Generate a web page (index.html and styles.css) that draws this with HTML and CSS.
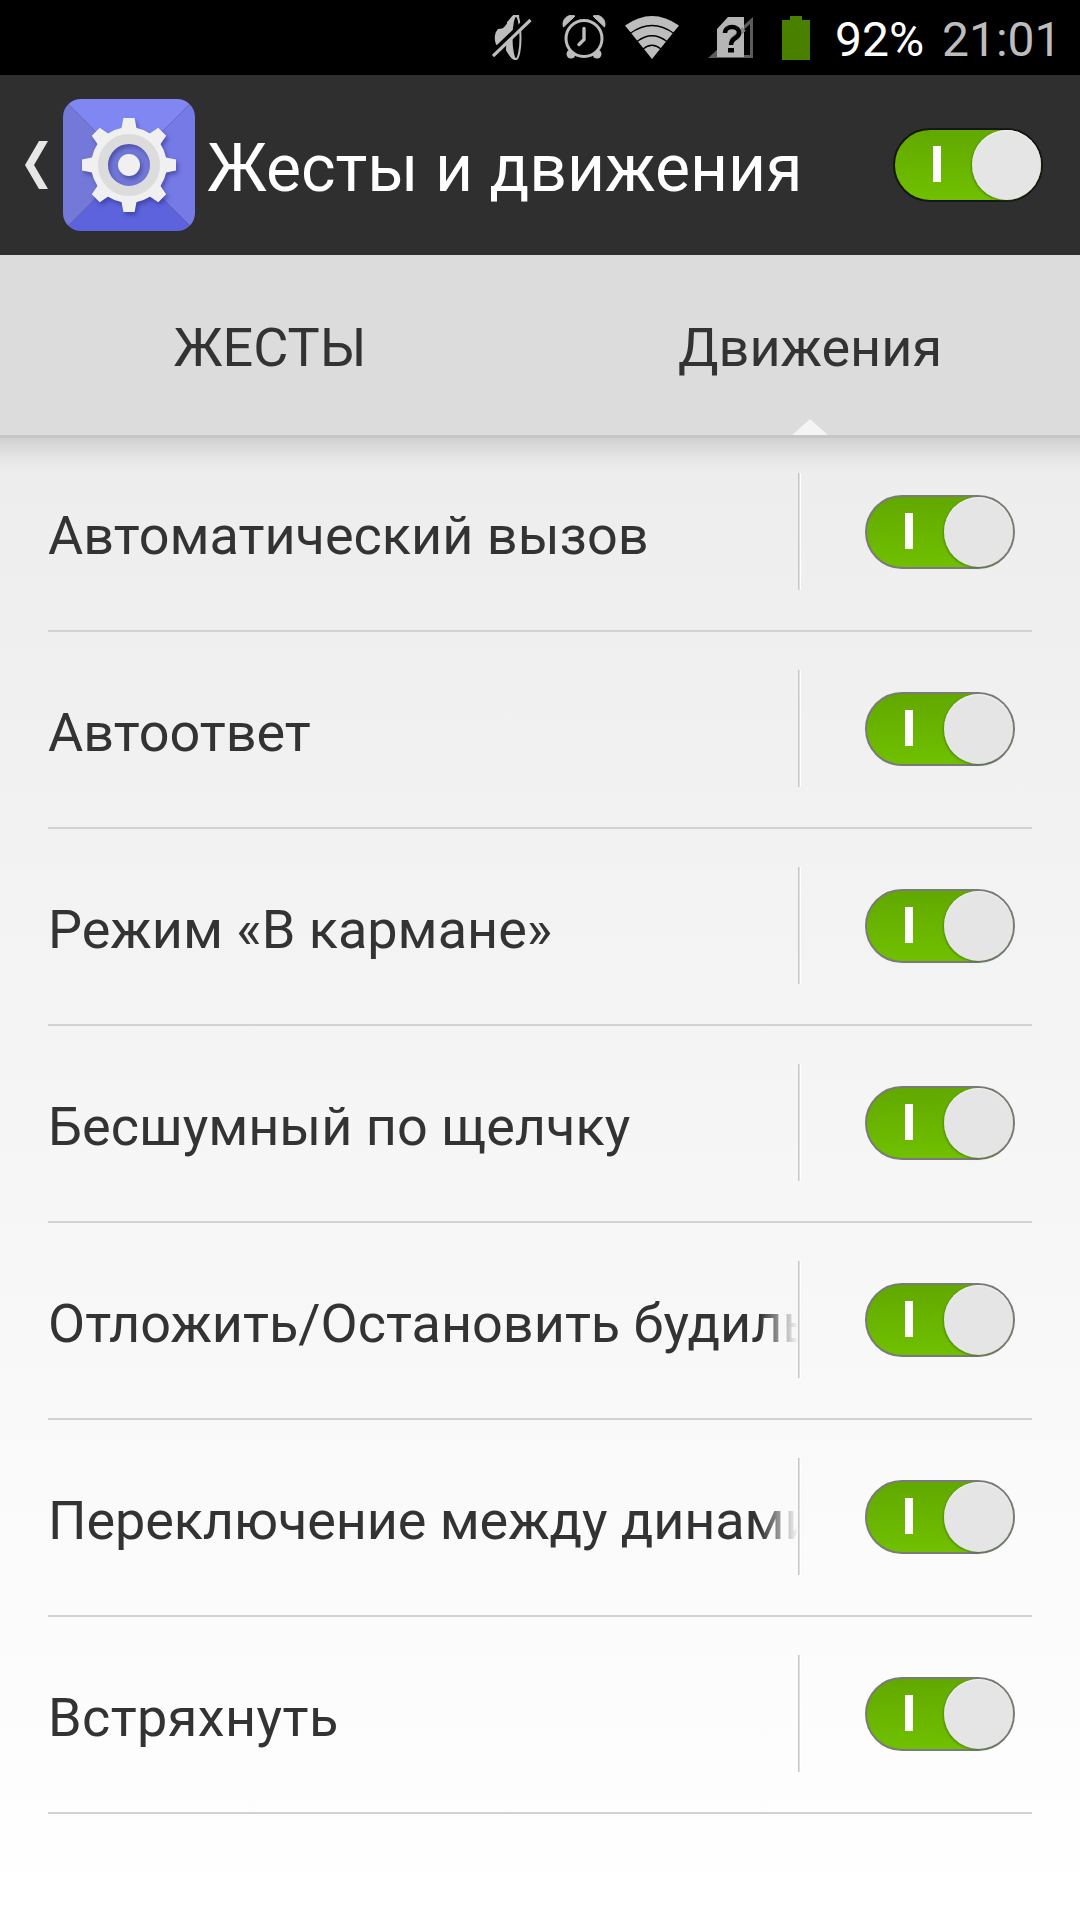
FILE: index.html
```html
<!DOCTYPE html>
<html lang="ru">
<head>
  <meta charset="UTF-8">
  <meta name="viewport" content="width=device-width, initial-scale=1.0">
  <title>Жесты и движения</title>
  <link rel="stylesheet" href="styles.css">
</head>
<body>
  <div class="statusbar">
    <svg class="icon-mute" width="40" height="47" viewBox="0 0 40 47">
      <path d="M22 1 C19 1 15 12 10 14.500 L6 15 C2 19 2 27 4.500 31 L8 31 L28 12 L27 1 Z" fill="#bdbdbd"/>
      <path d="M14 36 C17 40 19 46 23 46 L24 46 V26 Z" fill="#bdbdbd"/>
      <ellipse cx="24" cy="23.500" rx="4.500" ry="21.500" fill="#000" stroke="#bdbdbd" stroke-width="2"/>
      <path d="M22 1 C19 8 19 16 19 23 C19 33 19 40 23 46 L17 41 L14 36 L15 8 Z" fill="#bdbdbd"/>
      <path d="M0 38.500 L36 4" stroke="#000" stroke-width="4"/>
      <path d="M1 42 L38.500 6" stroke="#bdbdbd" stroke-width="3.200"/>
    </svg>
    <svg class="icon-alarm" width="44" height="44" viewBox="0 0 44 44">
      <path d="M1.500 12 C-1 5 6-2 13 1 Z M42.500 12 C45 5 38-2 31 1 Z" fill="#bdbdbd" stroke="#bdbdbd"/>
      <circle cx="9" cy="39" r="4.500" fill="#bdbdbd"/>
      <circle cx="35" cy="39" r="4.500" fill="#bdbdbd"/>
      <circle cx="22" cy="23.500" r="18" fill="#000" stroke="#bdbdbd" stroke-width="3"/>
      <path d="M22 13.500 V24.500 L17 29.500" fill="none" stroke="#bdbdbd" stroke-width="3.400" stroke-linecap="round"/>
    </svg>
    <svg class="icon-wifi" width="54" height="43" viewBox="0 0 54 43">
      <path d="M0 9.500 Q27-9.500 54 9.500 L27 43 Z" fill="#bdbdbd"/>
      <path d="M5 17.500 Q27 1.500 49 17.500 M12 25.500 Q27 14 42 25.500 M18 33 Q27 25.500 36 33" fill="none" stroke="#000" stroke-width="1.300"/>
    </svg>
    <svg class="icon-sim" width="45" height="42" viewBox="0 0 45 42">
      <path d="M0 41 L45 0 V41 Z M42 7 L10 38 H42 Z" fill="#5c5c5c" fill-rule="evenodd"/>
      <path d="M36 0 H20 L9 12 V40 H36 Z" fill="#b5b5b5"/>
      <path d="M36 12 L23 24" stroke="#868686" stroke-width="5"/>
      <path d="M17 16 C17 8 31 8 31 16 C31 22 23 20 23 28" fill="none" stroke="#000" stroke-width="4.500"/>
      <rect x="20" y="31" width="6" height="4.500" fill="#000"/>
    </svg>
    <svg class="icon-battery" width="28" height="44" viewBox="0 0 28 44">
      <path d="M8 0 H20 V4 H28 V44 H0 V4 H8 Z" fill="#4a8000"/>
    </svg>
    <span class="battery-level">92%</span>
    <span class="clock">21:01</span>
  </div>

  <div class="header">
    <svg class="back" width="23" height="48" viewBox="0 0 23 48">
      <path d="M14 0 H23 L9 24 L23 48 H14 L0 24 Z" fill="#e6e6e6"/>
    </svg>
    <svg class="app-icon" width="132" height="132" viewBox="-66 -66 132 132">
      <path d="M-66-66 H66 L0 0 Z" fill="#8087f3"/>
      <path d="M66-66 V66 L0 0 Z" fill="#757ae7"/>
      <path d="M66 66 H-66 L0 0 Z" fill="#5d63dc"/>
      <path d="M-66 66 V-66 L0 0 Z" fill="#7478d8"/>
      <circle r="30" fill="#7278d8"/>
      <g class="gear">
        <g fill="#f0f0f0">
          <path d="M-7.700-36 L-5.600-47 H5.600 L7.700-36 V36 L5.600 47 H-5.600 L-7.700 36 Z M-36-7.700 L-47-5.600 V5.600 L-36 7.700 H36 L47 5.600 V-5.600 L36-7.700 Z" clip-path="url(#outer)"/>
          <path d="M-7.700-36 L-5.600-47 H5.600 L7.700-36 V36 L5.600 47 H-5.600 L-7.700 36 Z M-36-7.700 L-47-5.600 V5.600 L-36 7.700 H36 L47 5.600 V-5.600 L36-7.700 Z" transform="rotate(45)" clip-path="url(#outer)"/>
        </g>
        <circle r="34" fill="none" stroke="#f0f0f0" stroke-width="7.500"/>
        <circle r="26" fill="none" stroke="#dcdcdc" stroke-width="10"/>
      </g>
      <circle class="gear" r="11" fill="#f0f0f0"/>
      <clipPath id="outer">
        <path d="M-50-50 H50 V50 H-50 Z M0-28 A28 28 0 1 0 0 28 A28 28 0 1 0 0-28 Z" clip-rule="evenodd"/>
      </clipPath>
    </svg>
    <h1>Жесты и движения</h1>
    <div class="switch switch-dark"></div>
  </div>

  <div class="tabs">
    <div class="tab">ЖЕСТЫ</div>
    <div class="tab active">Движения</div>
  </div>

  <div class="list">
    <div class="row">
      <div class="label">Автоматический вызов</div>
      <div class="toggle"><div class="switch"></div></div>
    </div>
    <div class="row">
      <div class="label">Автоответ</div>
      <div class="toggle"><div class="switch"></div></div>
    </div>
    <div class="row">
      <div class="label">Режим «В кармане»</div>
      <div class="toggle"><div class="switch"></div></div>
    </div>
    <div class="row">
      <div class="label">Бесшумный по щелчку</div>
      <div class="toggle"><div class="switch"></div></div>
    </div>
    <div class="row">
      <div class="label fade">Отложить/Остановить будильник</div>
      <div class="toggle"><div class="switch"></div></div>
    </div>
    <div class="row">
      <div class="label fade tight">Переключение между динамиками</div>
      <div class="toggle"><div class="switch"></div></div>
    </div>
    <div class="row">
      <div class="label wide">Встряхнуть</div>
      <div class="toggle"><div class="switch"></div></div>
    </div>
  </div>
</body>
</html>
```
FILE: styles.css
```css
* {
  box-sizing: border-box;
}
body {
  margin: 0;
  height: 1920px;
  overflow: hidden;
  display: flex;
  flex-direction: column;
  font-family: Roboto, "Noto Sans", sans-serif;
  color: #333;
}
svg {
  display: block;
  flex: none;
}

/* status bar */
.statusbar {
  height: 75px;
  flex: none;
  display: flex;
  align-items: flex-start;
  justify-content: flex-end;
  padding: 14px 24px 0 0;
  background-color: #000;
  color: #fff;
  font-size: 48px;
  line-height: 51px;
}
.icon-mute {
  margin-right: 30px;
}
.icon-alarm {
  margin: 1px 19px 0 0;
}
.icon-wifi {
  margin: 2px 29px 0 0;
}
.icon-sim {
  margin: 3px 29px 0 0;
}
.icon-battery {
  margin-top: 2px;
}
.battery-level {
  width: 91px;
  margin-left: 25px;
  white-space: nowrap;
}
.clock {
  width: 114px;
  margin-left: 16px;
  color: #bdbdbd;
  white-space: nowrap;
}

/* title bar */
.header {
  height: 180px;
  flex: none;
  display: flex;
  align-items: center;
  padding: 0 37px 0 25px;
  background-color: #2f2f2f;
}
.app-icon {
  margin-left: 15px;
  border-radius: 18px;
}
.gear {
  filter: drop-shadow(2px 3px 2px rgba(40, 40, 120, 0.5));
}
h1 {
  flex: 1;
  margin: 7px 0 0 12px;
  color: #fff;
  font-size: 66px;
  font-weight: 400;
  line-height: 78px;
  white-space: nowrap;
}

/* on/off switch */
.switch {
  position: relative;
  width: 150px;
  height: 74px;
  flex: none;
  border: 2px solid #7a7a7a;
  border-radius: 37px;
  background: linear-gradient(#62a800, #70c000);
}
.switch-dark {
  border-color: #161616;
}
.switch::before {
  content: "";
  position: absolute;
  left: 38px;
  top: 16px;
  width: 8px;
  height: 36px;
  background-color: #fff;
}
.switch::after {
  content: "";
  position: absolute;
  right: 0;
  top: 0;
  width: 69px;
  height: 70px;
  border-radius: 50%;
  background-color: #e5e5e5;
  box-shadow: -1px 1px 2px rgba(40, 90, 0, 0.45), inset 0 1px 1px #f2f2f2;
}

/* tabs */
.tabs {
  height: 180px;
  flex: none;
  display: flex;
  background-color: #dcdcdc;
  font-size: 54px;
}
.tab {
  position: relative;
  flex: 1;
  padding-top: 3px;
  line-height: 180px;
  text-align: center;
}
.tab.active::after {
  content: "";
  position: absolute;
  left: 50%;
  bottom: 0;
  margin-left: -18px;
  border: 18px solid transparent;
  border-top: 0;
  border-bottom: 16px solid #f4f4f4;
}

/* list */
.list {
  flex: 1;
  padding: 0 48px;
  background:
    linear-gradient(#c6c6c6, #c6c6c6) 0 0 / 100% 3px no-repeat,
    linear-gradient(rgba(0, 0, 0, 0.12), rgba(0, 0, 0, 0.04) 50%, transparent) 0 3px / 100% 36px no-repeat,
    linear-gradient(#ededed, #fff);
}
.row {
  height: 197px;
  display: flex;
  align-items: center;
  border-bottom: 2px solid #d2d2d2;
}
.label {
  width: 750px;
  padding-top: 6px;
  overflow: hidden;
  font-size: 54px;
  line-height: 70px;
  white-space: nowrap;
}
.fade {
  -webkit-mask-image: linear-gradient(to right, #000 712px, transparent 750px);
  mask-image: linear-gradient(to right, #000 712px, transparent 750px);
}
.tight {
  letter-spacing: -0.1px;
}
.wide {
  letter-spacing: 0.4px;
}
.toggle {
  height: 117px;
  display: flex;
  align-items: center;
  margin-bottom: 2px;
  padding-left: 66px;
  border-left: 1px solid #c8c8c8;
  box-shadow: inset 1px 0 #dedede, inset 2px 0 #fff;
}
```
